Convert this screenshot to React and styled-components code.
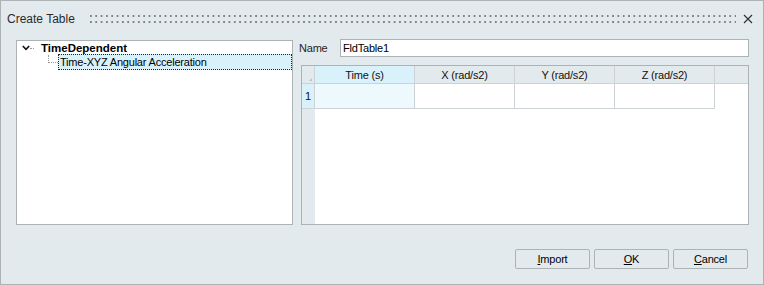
import styled, { createGlobalStyle } from "styled-components";

const GlobalStyle = createGlobalStyle`
  html, body { margin: 0; padding: 0; }
  body { font-family: "Liberation Sans", Arial, sans-serif; }
`;

const Window = styled.div`
  width: 764px;
  height: 285px;
  box-sizing: border-box;
  border: 1px solid #adb2b5;
  background: #e3eaee;
  display: flex;
  flex-direction: column;
  color: #1e1e1e;
`;

const TitleBar = styled.div`
  height: 36px;
  display: flex;
  align-items: center;
  padding: 0 10px 0 6px;
`;

const Title = styled.span`
  font-size: 12px;
  color: #2a2a2a;
`;

const Grip = styled.div`
  flex: 1;
  height: 8px;
  margin: 0 7px 0 15px;
  background-image: linear-gradient(90deg, #7f8487 2px, transparent 2px);
  background-size: 5.33px 8px;
  -webkit-mask-image: linear-gradient(#000 2px, transparent 2px);
  mask-image: linear-gradient(#000 2px, transparent 2px);
  -webkit-mask-size: 100% 6px;
  mask-size: 100% 6px;
`;

const Close = styled.button`
  border: 0;
  background: none;
  padding: 0;
  width: 10px;
  height: 10px;
  display: flex;
  align-items: center;
  justify-content: center;
`;

const Content = styled.div`
  height: 186px;
  margin-top: 2px;
  padding: 0 14px 0 15px;
  display: flex;
  gap: 6px;
`;

const TreePanel = styled.div`
  width: 277px;
  height: 185px;
  margin-top: 1px;
  box-sizing: border-box;
  border: 1px solid #adb2b5;
  background: #fff;
  font-size: 11px;
`;

const TreeRow = styled.div`
  display: flex;
  align-items: ${(p) => (p.$child ? "flex-start" : "center")};
  height: ${(p) => (p.$child ? 16 : 13)}px;
  padding-left: ${(p) => (p.$child ? 31 : 5)}px;
`;

const Toggle = styled.svg`
  width: 8px;
  height: 6px;
  flex: none;
  margin-top: 1px;
`;

const Stub = styled.span`
  width: 4px;
  height: 1px;
  margin: 2px 7px 0 0;
  border-top: 1px dotted #9a9a9a;
`;

const Connector = styled.span`
  width: 10px;
  height: 8px;
  box-sizing: border-box;
  border-left: 1px dotted #9a9a9a;
  border-bottom: 1px dotted #9a9a9a;
  margin-top: 1px;
`;

const NodeLabel = styled.span`
  font-weight: ${(p) => (p.$bold ? 700 : 400)};
  font-size: ${(p) => (p.$bold ? "11.5px" : "11px")};
  letter-spacing: ${(p) => (p.$bold ? "0" : "-0.2px")};
  color: #000;
`;

const Selected = styled.div`
  flex: 1;
  height: 16px;
  box-sizing: border-box;
  border: 1px dotted #222;
  background: #d9f1fb;
  display: flex;
  align-items: center;
  padding-left: 1px;
`;

const RightCol = styled.div`
  width: 450px;
  display: flex;
  flex-direction: column;
`;

const NameRow = styled.div`
  height: 18px;
  display: flex;
  align-items: center;
`;

const Label = styled.span`
  width: 41px;
  font-size: 11px;
  letter-spacing: -0.2px;
`;

const Input = styled.input`
  flex: 1;
  height: 18px;
  box-sizing: border-box;
  border: 1px solid #adb2b5;
  padding: 0 2px;
  font-family: "Liberation Sans", Arial, sans-serif;
  font-size: 11px;
  letter-spacing: -0.2px;
  color: #000;
  outline: none;
`;

const Grid = styled.div`
  margin: 8px 0 0 2px;
  height: 160px;
  box-sizing: border-box;
  border: 1px solid #adb2b5;
  background: #fff;
  display: grid;
  grid-template-columns: 13px 100px 100px 100px 100px 1fr;
  grid-template-rows: 18px 25px 1fr;
  font-size: 11px;
  letter-spacing: -0.2px;
`;

const Cell = styled.div`
  box-sizing: border-box;
  border-right: ${(p) => (p.$noRight ? "0" : "1px solid #cdd2d5")};
  border-bottom: ${(p) => (p.$noBottom ? "0" : "1px solid #cdd2d5")};
  background: ${(p) => p.$bg || "#fff"};
  display: flex;
  align-items: center;
  justify-content: center;
  position: relative;
  color: #111;
`;

const Corner = styled(Cell)`
  &::after {
    content: "";
    position: absolute;
    right: 2px;
    bottom: 2px;
    border-style: solid;
    border-width: 0 0 3px 3px;
    border-color: transparent transparent #bfc4c7 transparent;
  }
`;

const Filler = styled.div`
  grid-column: 2 / -1;
  background: #fff;
`;

const Footer = styled.div`
  margin-top: 24px;
  padding-right: 15px;
  display: flex;
  justify-content: flex-end;
  gap: 4px;
`;

const Button = styled.button`
  width: 75px;
  height: 20px;
  box-sizing: border-box;
  border: 1px solid #adb2b5;
  border-radius: 2px;
  background: #e3eaee;
  font-family: "Liberation Sans", Arial, sans-serif;
  font-size: 11px;
  letter-spacing: -0.2px;
  color: #000;
  padding: 0;
  u { text-decoration: underline; }
`;

const columns = ["Time (s)", "X (rad/s2)", "Y (rad/s2)", "Z (rad/s2)"];

const App = () => {
  return (
    <>
      <GlobalStyle />
      <Window>
        <TitleBar>
          <Title>Create Table</Title>
          <Grip />
          <Close>
            <svg width="10" height="10" viewBox="0 0 10 10">
              <path d="M1 1L9 9M9 1L1 9" stroke="#333" strokeWidth="1.2" />
            </svg>
          </Close>
        </TitleBar>
        <Content>
          <TreePanel>
            <TreeRow>
              <Toggle viewBox="0 0 8 6">
                <path d="M0.8 1L4 4.4L7.2 1" fill="none" stroke="#111" strokeWidth="1.6" />
              </Toggle>
              <Stub />
              <NodeLabel $bold>TimeDependent</NodeLabel>
            </TreeRow>
            <TreeRow $child>
              <Connector />
              <Selected>
                <NodeLabel>Time-XYZ Angular Acceleration</NodeLabel>
              </Selected>
            </TreeRow>
          </TreePanel>
          <RightCol>
            <NameRow>
              <Label>Name</Label>
              <Input defaultValue="FldTable1" />
            </NameRow>
            <Grid>
              <Corner $bg="#e3eaee" />
              {columns.map((c, i) => (
                <Cell key={c} $bg={i === 0 ? "#d9f1fb" : "#e3eaee"}>
                  {c}
                </Cell>
              ))}
              <Cell $bg="#e3eaee" $noRight />
              <Cell $bg="#d9f1fb">1</Cell>
              {columns.map((c, i) => (
                <Cell key={c} $bg={i === 0 ? "#eef9fd" : "#fff"} />
              ))}
              <Cell $noRight $noBottom />
              <Cell $bg="#e3eaee" $noRight $noBottom />
              <Filler />
            </Grid>
          </RightCol>
        </Content>
        <Footer>
          <Button>
            <u>I</u>mport
          </Button>
          <Button>
            <u>O</u>K
          </Button>
          <Button>
            <u>C</u>ancel
          </Button>
        </Footer>
      </Window>
    </>
  );
};

export default App;
